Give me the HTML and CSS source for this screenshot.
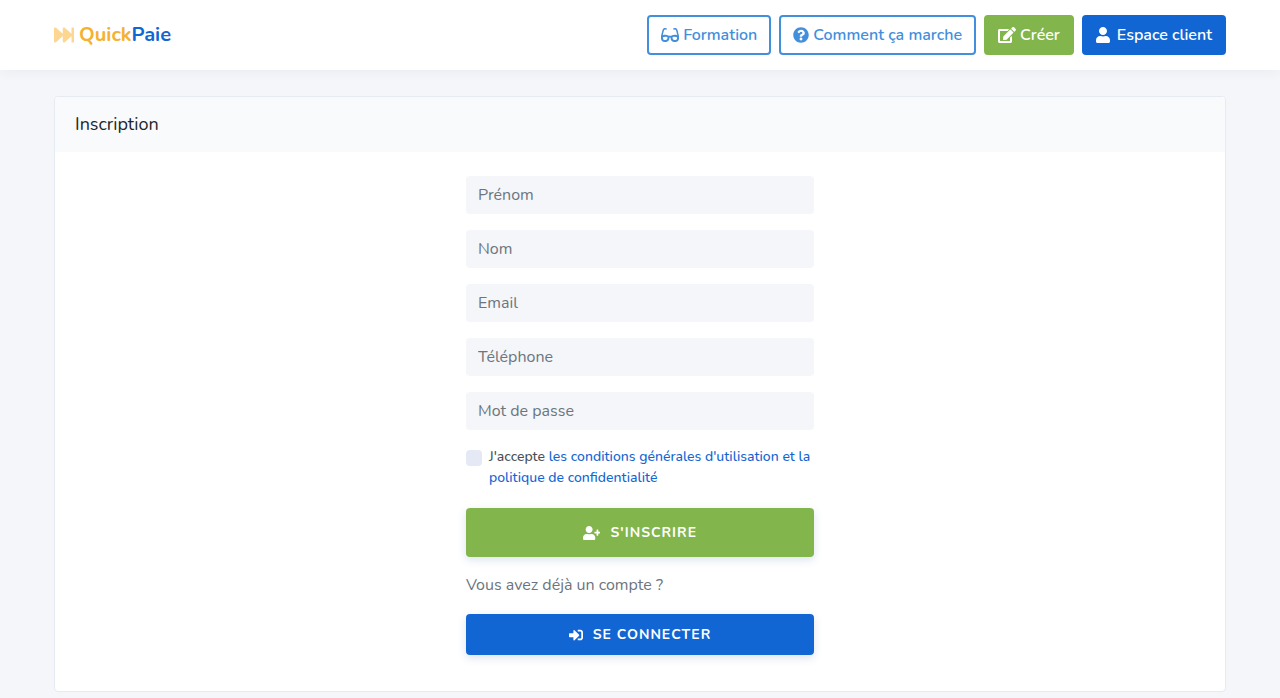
FILE: index.html
```html
<!DOCTYPE html>
<html lang="fr">
<head>
    <meta charset="UTF-8">
    <meta name="viewport" content="width=device-width, initial-scale=1.0">
    <title>QuickPaie - Inscription</title>
    <link rel="stylesheet" href="styles.css">
</head>
<body>

    <header class="navbar">
        <a class="brand" href="#">
            <svg class="icon" viewBox="0 0 512 512" aria-hidden="true"><path d="M512 76v360c0 6.600-5.400 12-12 12h-40c-6.600 0-12-5.400-12-12V284.100L276.500 440.600c-20.600 17.200-52.500 2.800-52.500-24.600V284.100L52.500 440.600C31.900 457.800 0 443.400 0 416V96c0-27.400 31.900-41.700 52.500-24.600L224 226.800V96c0-27.400 31.900-41.700 52.500-24.600L448 226.800V76c0-6.600 5.400-12 12-12h40c6.600 0 12 5.400 12 12z"/></svg>
            <span><span class="brand-quick">Quick</span><span class="brand-paie">Paie</span></span>
        </a>
        <nav class="menu">
            <a class="btn btn-outline" href="#">
                <svg class="icon" viewBox="0 0 576 512" aria-hidden="true"><path d="M574.100 280.370L528.750 98.660c-5.910-23.700-21.590-44.050-43-55.810-21.440-11.730-46.970-14.110-70.190-6.330l-15.250 5.080c-8.390 2.790-12.920 11.860-10.120 20.240l5.060 15.180c2.790 8.380 11.850 12.910 20.230 10.120l13.180-4.390c10.870-3.620 23-3.570 33.160 1.730 10.290 5.370 17.570 14.560 20.370 25.820l38.460 153.820c-22.190-6.810-49.790-12.460-81.200-12.460-34.770 0-73.980 7.020-114.850 26.740h-73.180c-40.870-19.740-80.080-26.750-114.860-26.750-31.420 0-59.020 5.650-81.210 12.460l38.460-153.830c2.790-11.250 10.090-20.450 20.380-25.810 10.160-5.300 22.280-5.350 33.150-1.730l13.170 4.390c8.380 2.790 17.440-1.740 20.230-10.120l5.060-15.180c2.800-8.380-1.730-17.450-10.120-20.240l-15.250-5.080c-23.220-7.780-48.750-5.410-70.190 6.330-21.410 11.770-37.090 32.110-43 55.800L1.900 280.370A64.218 64.218 0 0 0 0 295.860v70.250C0 429.010 51.580 480 115.200 480h37.120c60.280 0 110.370-45.940 114.880-105.370l2.930-38.630h35.750l2.930 38.630C313.310 434.060 363.400 480 423.680 480h37.120c63.620 0 115.200-50.990 115.200-113.880v-70.250c0-5.230-.64-10.430-1.900-15.500zm-370.720 89.420c-1.970 25.910-24.400 46.210-51.060 46.210H115.200C86.970 416 64 393.620 64 366.110v-37.540c18.120-6.490 43.420-12.920 72.580-12.920 23.860 0 47.260 4.330 69.930 12.920l-3.130 41.220zM512 366.120c0 27.510-22.970 49.880-51.200 49.880h-37.120c-26.670 0-49.100-20.300-51.060-46.210l-3.130-41.220c22.670-8.590 46.080-12.920 69.950-12.920 29.120 0 54.430 6.440 72.550 12.930v37.540z"/></svg>
                Formation
            </a>
            <a class="btn btn-outline" href="#">
                <svg class="icon" viewBox="0 0 512 512" aria-hidden="true"><path d="M504 256c0 136.997-111.043 248-248 248S8 392.997 8 256C8 119.083 119.043 8 256 8s248 111.083 248 248zM262.655 90c-54.497 0-89.255 22.957-116.549 63.758-3.536 5.286-2.353 12.415 2.715 16.258l34.699 26.310c5.205 3.947 12.621 3.008 16.665-2.122 17.864-22.658 30.113-35.797 57.303-35.797 20.429 0 45.698 13.148 45.698 32.958 0 14.976-12.363 22.667-32.534 33.976C247.128 238.528 216 254.941 216 296v4c0 6.627 5.373 12 12 12h56c6.627 0 12-5.373 12-12v-1.333c0-28.462 83.186-29.647 83.186-106.667 0-58.002-60.165-102-116.531-102zM256 338c-25.365 0-46 20.635-46 46 0 25.364 20.635 46 46 46s46-20.636 46-46c0-25.365-20.635-46-46-46z"/></svg>
                Comment ça marche
            </a>
            <a class="btn btn-green" href="#">
                <svg class="icon" viewBox="0 0 576 512" aria-hidden="true"><path d="M402.600 83.200l90.200 90.200c3.800 3.800 3.800 10 0 13.800L274.400 405.600l-92.800 10.300c-12.400 1.400-22.900-9.100-21.500-21.500l10.300-92.800L388.800 83.200c3.800-3.800 10-3.800 13.800 0zm162-22.900l-48.800-48.800c-15.200-15.200-39.900-15.200-55.200 0l-35.400 35.400c-3.800 3.800-3.800 10 0 13.800l90.200 90.200c3.800 3.800 10 3.800 13.800 0l35.400-35.400c15.200-15.300 15.200-40 0-55.200zM384 346.200V448H64V128h229.800c3.200 0 6.200-1.300 8.500-3.500l40-40c7.600-7.600 2.200-20.500-8.500-20.500H48C21.500 64 0 85.500 0 112v352c0 26.500 21.500 48 48 48h352c26.500 0 48-21.500 48-48V306.200c0-10.700-12.900-16-20.500-8.500l-40 40c-2.200 2.300-3.500 5.300-3.500 8.500z"/></svg>
                Créer
            </a>
            <a class="btn btn-blue btn-client" href="#">
                <svg class="icon" viewBox="0 0 448 512" aria-hidden="true"><path d="M224 256c70.700 0 128-57.300 128-128S294.700 0 224 0 96 57.300 96 128s57.300 128 128 128zm89.600 32h-16.700c-22.200 10.200-46.900 16-72.900 16s-50.600-5.800-72.900-16h-16.700C60.200 288 0 348.200 0 422.400V464c0 26.500 21.500 48 48 48h352c26.500 0 48-21.500 48-48v-41.600c0-74.200-60.200-134.400-134.400-134.400z"/></svg>
                Espace client
            </a>
        </nav>
    </header>

    <main class="container">
        <div class="card">
            <h1 class="card-header">Inscription</h1>
            <form class="form">
                <input class="field" type="text" name="prenom" placeholder="Prénom" aria-label="Prénom">
                <input class="field" type="text" name="nom" placeholder="Nom" aria-label="Nom">
                <input class="field" type="email" name="email" placeholder="Email" aria-label="Email">
                <input class="field" type="tel" name="telephone" placeholder="Téléphone" aria-label="Téléphone">
                <input class="field" type="password" name="password" placeholder="Mot de passe" aria-label="Mot de passe">

                <div class="terms">
                    <input class="checkbox" type="checkbox" id="cgu">
                    <label for="cgu">J'accepte <a href="#">les conditions générales d'utilisation et la politique de confidentialité</a></label>
                </div>

                <button class="submit btn-green" type="submit">
                    <svg class="icon" viewBox="0 0 640 512" aria-hidden="true"><path d="M624 208h-64v-64c0-8.800-7.200-16-16-16h-32c-8.800 0-16 7.200-16 16v64h-64c-8.800 0-16 7.200-16 16v32c0 8.800 7.200 16 16 16h64v64c0 8.800 7.200 16 16 16h32c8.800 0 16-7.200 16-16v-64h64c8.800 0 16-7.200 16-16v-32c0-8.800-7.200-16-16-16zm-400 48c70.700 0 128-57.300 128-128S294.700 0 224 0 96 57.300 96 128s57.300 128 128 128zm89.600 32h-16.700c-22.200 10.200-46.900 16-72.900 16s-50.600-5.800-72.900-16h-16.700C60.200 288 0 348.200 0 422.400V464c0 26.500 21.500 48 48 48h352c26.500 0 48-21.500 48-48v-41.600c0-74.200-60.200-134.400-134.400-134.400z"/></svg>
                    S'inscrire
                </button>
                <p class="already">Vous avez déjà un compte ?</p>
                <a class="login btn-blue" href="#">
                    <svg class="icon" viewBox="0 0 512 512" aria-hidden="true"><path d="M416 448h-84c-6.600 0-12-5.400-12-12v-40c0-6.600 5.400-12 12-12h84c17.700 0 32-14.300 32-32V160c0-17.700-14.300-32-32-32h-84c-6.600 0-12-5.400-12-12V76c0-6.600 5.400-12 12-12h84c53 0 96 43 96 96v192c0 53-43 96-96 96zm-47-201L201 79c-15-15-41-4.500-41 17v96H24c-13.300 0-24 10.700-24 24v96c0 13.300 10.700 24 24 24h136v96c0 21.500 26 32 41 17l168-168c9.300-9.400 9.300-24.600 0-34z"/></svg>
                    Se connecter
                </a>
            </form>
        </div>
    </main>

</body>
</html>
```
FILE: styles.css
```css
* {
    box-sizing: border-box;
}
body {
    margin: 0;
    font-family: Nunito, Lato, sans-serif;
    font-size: 16px;
    line-height: 24px;
    color: #495057;
    background: #f4f6fa;
}
a {
    color: #1266d3;
    text-decoration: none;
}
.icon {
    height: 16px;
    fill: currentColor;
    flex: none;
}

/* Top bar */
.navbar {
    display: flex;
    align-items: center;
    justify-content: space-between;
    padding: 15px 54px;
    background: #fff;
    box-shadow: 0 1px 12px rgba(30, 50, 90, 0.06);
}
.brand {
    display: flex;
    align-items: center;
    gap: 5px;
    font-size: 20px;
    font-weight: bold;
}
.brand .icon {
    height: 20px;
    color: #fdd692;
}
.brand-quick {
    color: #f5b130;
}
.menu {
    display: flex;
    gap: 8px;
}
.btn {
    display: flex;
    align-items: center;
    gap: 4px;
    padding: 6px 12px;
    border: 2px solid transparent;
    border-radius: 4px;
    font-weight: 600;
}
.btn-outline {
    color: #428fdc;
    border-color: #428fdc;
}
.btn-green {
    color: #fff;
    background-color: #82b54b;
    border-color: #82b54b;
}
.btn-blue {
    color: #fff;
    background-color: #1266d3;
    border-color: #1266d3;
}
.btn-client {
    gap: 7px;
}

/* Card */
.container {
    padding: 26px 54px 6px;
}
.card {
    background: #fff;
    border: 1px solid #e6eaf1;
    border-radius: 4px;
}
.card-header {
    margin: 0;
    padding: 15px 20px 16px;
    font-size: 18px;
    font-weight: normal;
    color: #212529;
    background: #f9fafc;
    border-radius: 3px 3px 0 0;
}

/* Form */
.form {
    display: flex;
    flex-direction: column;
    max-width: 348px;
    margin: 0 auto;
    padding: 24px 0 36px;
}
.field {
    width: 100%;
    height: 38px;
    margin-bottom: 16px;
    padding: 6px 12px;
    border: 0;
    border-radius: 4px;
    font: inherit;
    color: #495057;
    background: #f4f6fa;
}
.field::placeholder {
    color: #6c757d;
    opacity: 1;
}
.terms {
    display: flex;
    gap: 7px;
    margin-bottom: 20px;
    font-size: 14px;
    font-weight: 500;
    line-height: 21px;
}
.checkbox {
    appearance: none;
    flex: none;
    width: 16px;
    height: 16px;
    margin: 4px 0 0;
    border-radius: 4px;
    background: #e5e9f5;
}
.checkbox:checked {
    background: #1266d3;
}
.submit, .login {
    display: flex;
    align-items: center;
    justify-content: center;
    gap: 10px;
    padding: 10px;
    border: 0;
    border-radius: 4px;
    font-family: inherit;
    font-size: 14px;
    font-weight: bold;
    line-height: 21px;
    letter-spacing: 1px;
    text-transform: uppercase;
    box-shadow: 0 3px 8px rgba(30, 80, 140, 0.16);
    cursor: pointer;
}
.submit {
    padding: 14px;
}
.submit .icon, .login .icon {
    height: 14px;
}
.already {
    margin: 16px 0 17px;
    color: #6c757d;
}
```
